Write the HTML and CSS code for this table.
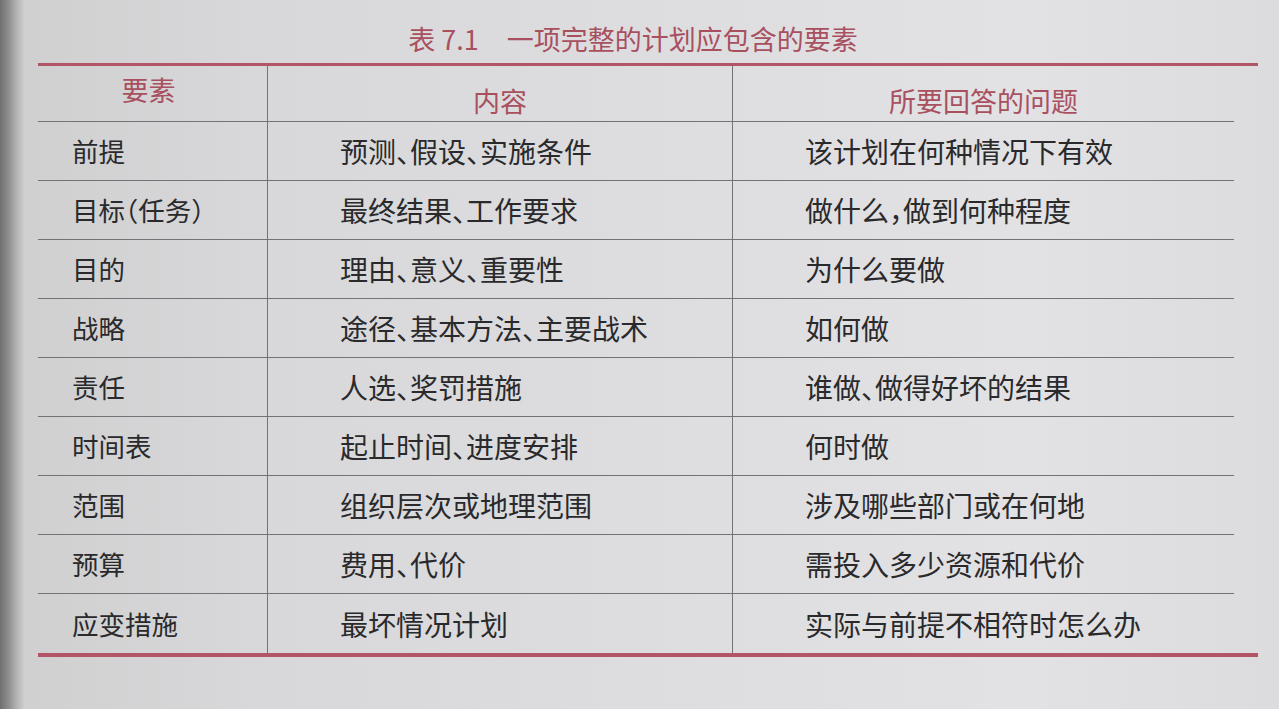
FILE: index.html
```html
<!DOCTYPE html>
<html lang="zh-CN">
<head>
<meta charset="utf-8">
<title>表 7.1 一项完整的计划应包含的要素</title>
<link rel="stylesheet" href="styles.css">
</head>
<body>
<div class="page">
  <div class="binding"></div>
  <main class="sheet">
    <h1 class="caption">表 7.1<span class="gap"></span>一项完整的计划应包含的要素</h1>
    <div class="table">
      <div class="cell head c1">要素</div>
      <div class="cell head c2">内容</div>
      <div class="cell head c3">所要回答的问题</div>

      <div class="cell c1">前提</div>
      <div class="cell c2">预测、假设、实施条件</div>
      <div class="cell c3">该计划在何种情况下有效</div>

      <div class="cell c1">目标（任务）</div>
      <div class="cell c2">最终结果、工作要求</div>
      <div class="cell c3">做什么，做到何种程度</div>

      <div class="cell c1">目的</div>
      <div class="cell c2">理由、意义、重要性</div>
      <div class="cell c3">为什么要做</div>

      <div class="cell c1">战略</div>
      <div class="cell c2">途径、基本方法、主要战术</div>
      <div class="cell c3">如何做</div>

      <div class="cell c1">责任</div>
      <div class="cell c2">人选、奖罚措施</div>
      <div class="cell c3">谁做、做得好坏的结果</div>

      <div class="cell c1">时间表</div>
      <div class="cell c2">起止时间、进度安排</div>
      <div class="cell c3">何时做</div>

      <div class="cell c1">范围</div>
      <div class="cell c2">组织层次或地理范围</div>
      <div class="cell c3">涉及哪些部门或在何地</div>

      <div class="cell c1">预算</div>
      <div class="cell c2">费用、代价</div>
      <div class="cell c3">需投入多少资源和代价</div>

      <div class="cell c1 last">应变措施</div>
      <div class="cell c2 last">最坏情况计划</div>
      <div class="cell c3 last">实际与前提不相符时怎么办</div>
    </div>
  </main>
</div>
</body>
</html>
```

FILE: styles.css
```css
html, body {
  margin: 0;
  padding: 0;
}

body {
  width: 1279px;
  height: 709px;
  overflow: hidden;
  font-family: "Noto Sans CJK SC", "Noto Sans", sans-serif;
  color: #2a2a2c;
  background: linear-gradient(90deg, #cfcfd0 0%, #d8d8da 20%, #dedee0 55%, #e2e2e4 80%, #dcdcde 100%);
}

.page {
  display: flex;
  height: 709px;
}

.binding {
  width: 24px;
  flex: none;
  background: linear-gradient(90deg, #6f6f70 0%, #8e8e8f 35%, #b9b9ba 75%, #cdcdce 100%);
}

.sheet {
  flex: 1;
  padding: 0 21px 0 14px;
}

.caption {
  margin: 0;
  height: 63px;
  box-sizing: border-box;
  padding-top: 24px;
  padding-right: 30px;
  text-align: center;
  font-size: 27px;
  font-weight: 400;
  line-height: 30px;
  color: #a8505f;
}

.gap {
  display: inline-block;
  width: 28px;
}

.table {
  display: grid;
  grid-template-columns: 230px 465px 501px;
  grid-template-rows: 56px repeat(9, 59px);
  border-top: 3px solid #b35566;
  border-bottom: 4px solid #b35566;
}

.cell {
  display: flex;
  align-items: center;
  font-size: 28px;
  line-height: 32px;
  font-feature-settings: "halt";
  border-bottom: 1px solid #767174;
  white-space: nowrap;
}

.cell.last {
  border-bottom: none;
}

.c1 {
  font-size: 26.5px;
  padding-left: 34px;
  border-right: 1px solid #767174;
}

.c2 {
  padding-left: 72px;
  border-right: 1px solid #767174;
}

.c3 {
  padding-left: 72px;
}

.head {
  color: #a8505f;
  font-size: 27px;
  justify-content: center;
  padding-left: 0;
}

.head.c1 {
  font-size: 27px;
  align-items: flex-start;
  padding-top: 8px;
  padding-right: 8px;
}

.head.c2,
.head.c3 {
  padding-top: 14px;
}
```
